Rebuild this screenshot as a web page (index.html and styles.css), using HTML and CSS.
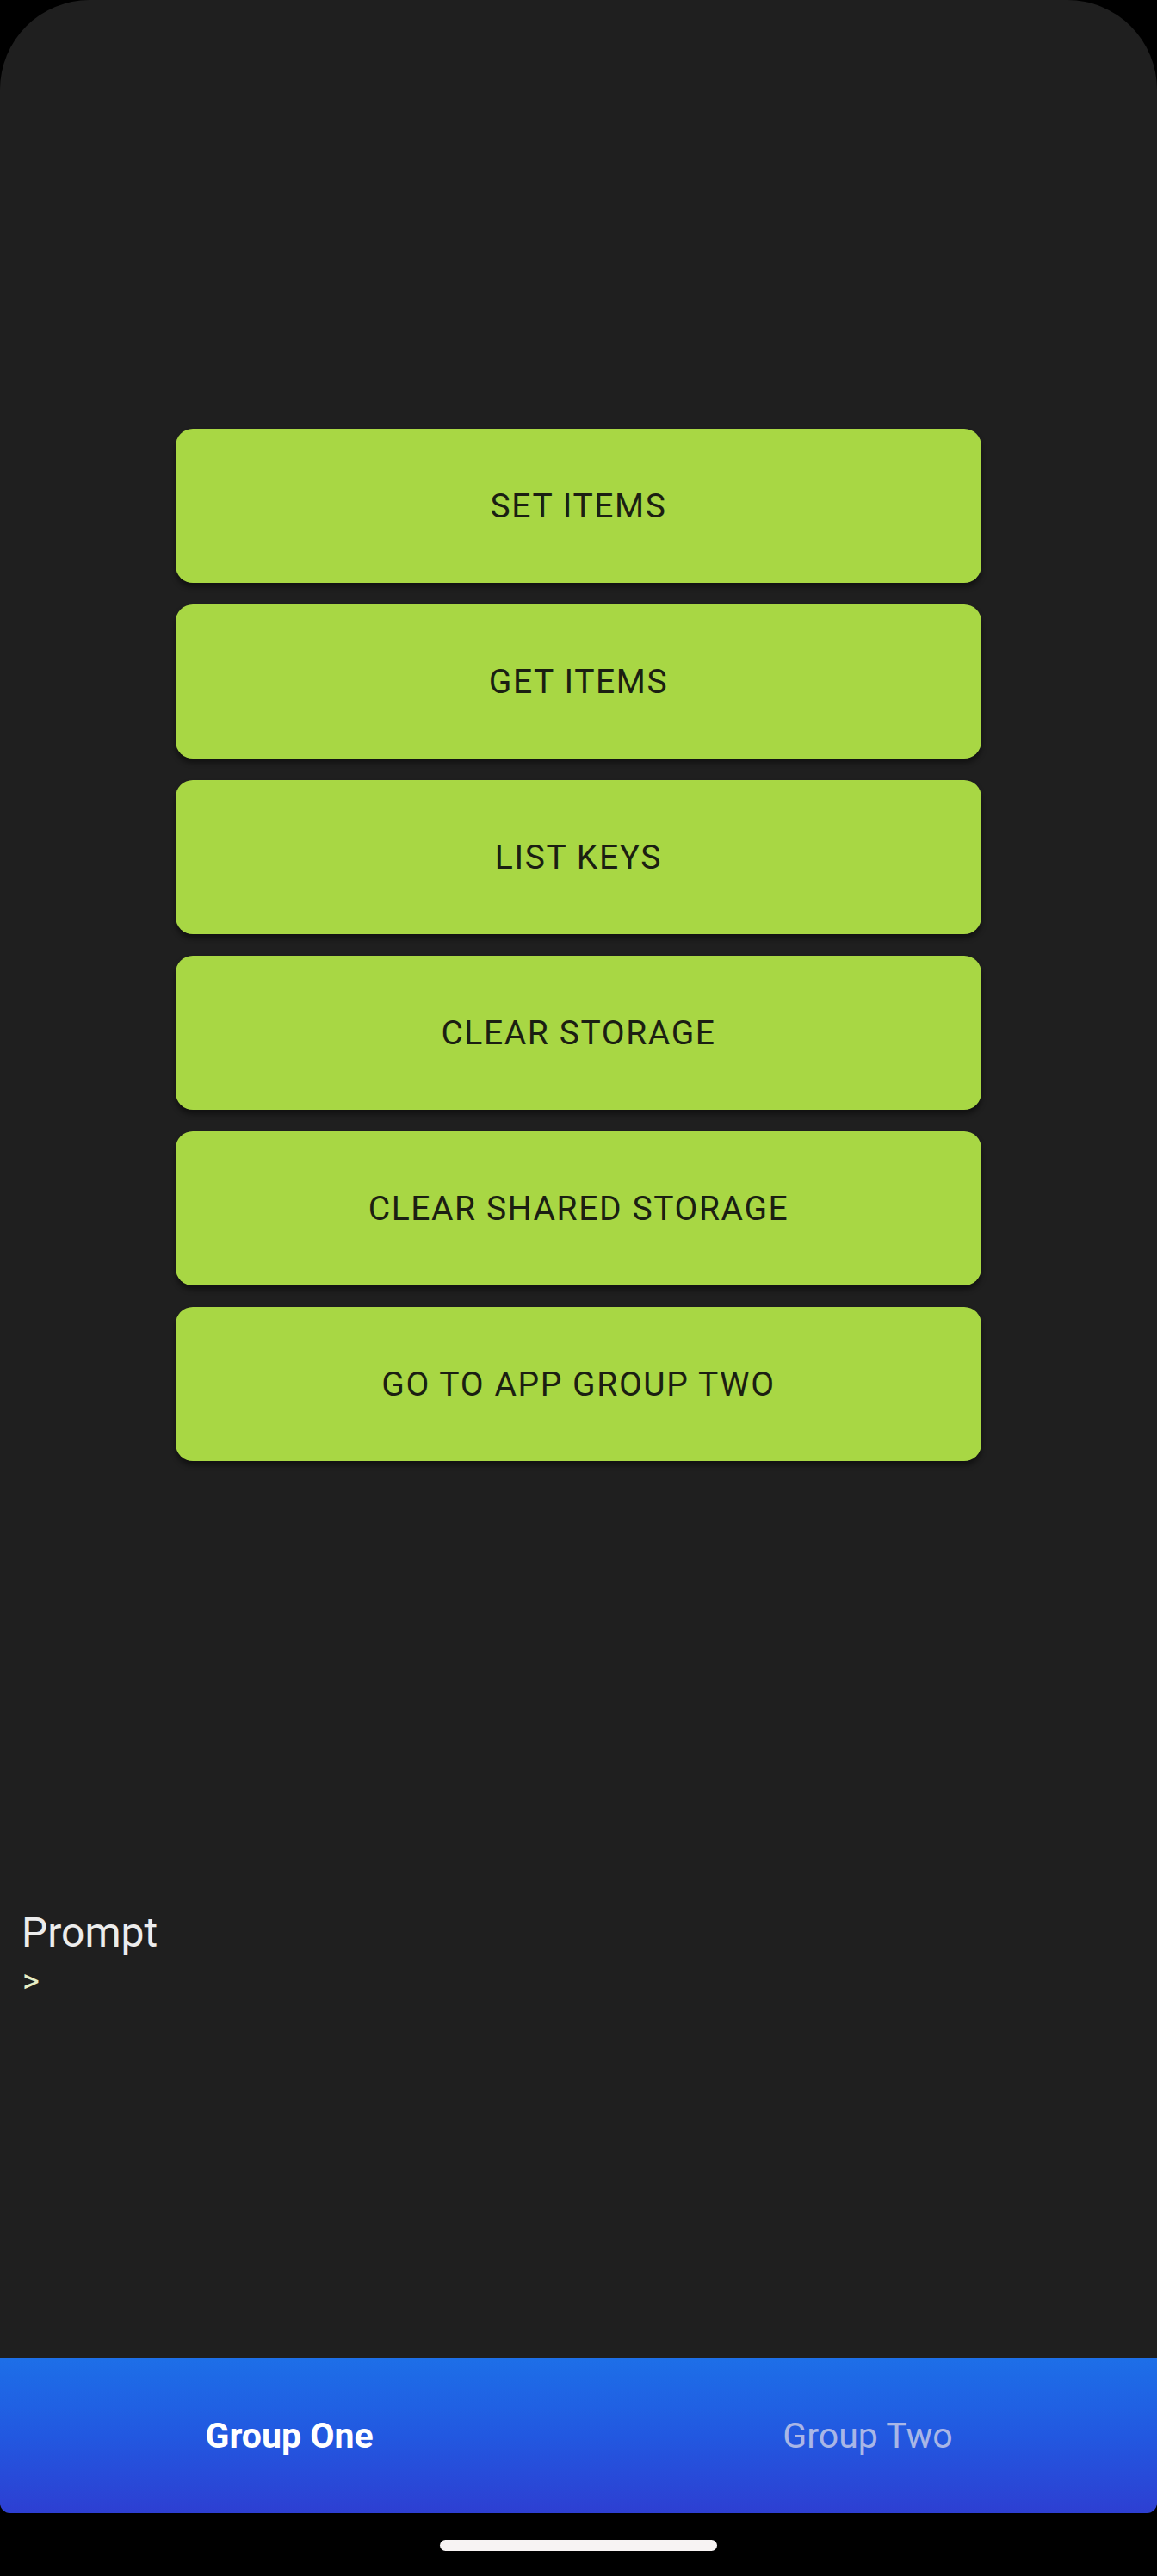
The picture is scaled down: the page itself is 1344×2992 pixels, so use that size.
FILE: index.html
```html
<!DOCTYPE html>
<html>
<head>
<meta charset="utf-8">
<link rel="stylesheet" href="styles.css">
</head>
<body>
<div class="device">
  <div class="screen">
    <main class="main">
      <div class="buttons">
        <button class="btn">SET ITEMS</button>
        <button class="btn">GET ITEMS</button>
        <button class="btn">LIST KEYS</button>
        <button class="btn">CLEAR STORAGE</button>
        <button class="btn">CLEAR SHARED STORAGE</button>
        <button class="btn">GO TO APP GROUP TWO</button>
      </div>
      <section class="prompt">
        <div class="prompt-title">Prompt</div>
        <div class="prompt-caret">&gt;</div>
      </section>
    </main>
    <nav class="tabbar">
      <div class="tab tab-active">Group One</div>
      <div class="tab">Group Two</div>
    </nav>
  </div>
  <div class="navarea"><div class="home-indicator"></div></div>
</div>
</body>
</html>
```
FILE: styles.css
```css
html, body {
  margin: 0;
  padding: 0;
  background: #000;
}
body {
  font-family: Roboto, "Noto Sans", sans-serif;
}
.device {
  width: 1344px;
  height: 2992px;
  display: flex;
  flex-direction: column;
  background: #000;
}
.screen {
  height: 2919px;
  background: #1f1f1f;
  border-radius: 104px 104px 12px 12px;
  overflow: hidden;
  display: flex;
  flex-direction: column;
}
.main {
  flex: 1;
  display: flex;
  flex-direction: column;
}
.buttons {
  padding-top: 498px;
  display: flex;
  flex-direction: column;
  align-items: center;
  gap: 25px;
}
.btn {
  width: 936px;
  height: 179px;
  border: none;
  border-radius: 20px;
  background: #a8d744;
  color: #1b1f12;
  font-family: Roboto, sans-serif;
  font-size: 39px;
  letter-spacing: 1.6px;
  font-weight: 400;
  box-shadow: 0 5px 6px rgba(0, 0, 0, 0.45);
  padding: 0;
}
.prompt {
  margin-top: 520px;
  padding-left: 25px;
}
.prompt-title {
  font-size: 48px;
  line-height: 56px;
  color: #ececec;
}
.prompt-caret {
  margin-top: 6px;
  font-size: 38px;
  line-height: 44px;
  color: #e6eec6;
  padding-left: 1px;
}
.tabbar {
  height: 180px;
  display: flex;
  background: linear-gradient(180deg, #1d6fe8 0%, #2258e0 50%, #2d3fd2 100%);
}
.tab {
  flex: 1;
  display: flex;
  align-items: center;
  justify-content: center;
  font-size: 41px;
  color: #a9b6e6;
  font-weight: 400;
}
.tab-active {
  color: #ffffff;
  font-weight: 700;
}
.navarea {
  flex: 1;
  display: flex;
  justify-content: center;
  padding-top: 31px;
}
.home-indicator {
  width: 322px;
  height: 13px;
  border-radius: 7px;
  background: #f7f3f3;
}
```
